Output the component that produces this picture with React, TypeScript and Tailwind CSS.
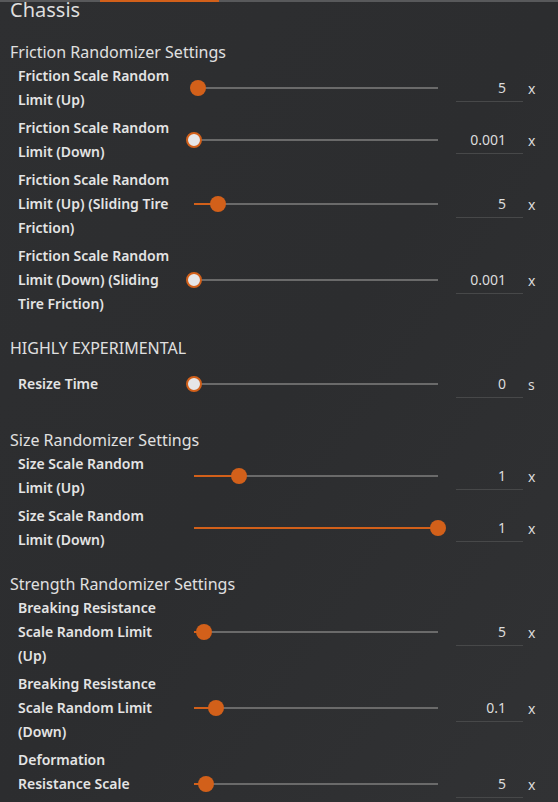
type Row = {
  label: string;
  value: string;
  unit: string;
  pos: number; // 0..1 along the track
};

type Section = {
  title: string;
  rows: Row[];
};

const SECTIONS: Section[] = [
  {
    title: "Friction Randomizer Settings",
    rows: [
      { label: "Friction Scale Random Limit (Up)", value: "5", unit: "x", pos: 0.016 },
      { label: "Friction Scale Random Limit (Down)", value: "0.001", unit: "x", pos: 0 },
      { label: "Friction Scale Random Limit (Up) (Sliding Tire Friction)", value: "5", unit: "x", pos: 0.098 },
      { label: "Friction Scale Random Limit (Down) (Sliding Tire Friction)", value: "0.001", unit: "x", pos: 0 },
    ],
  },
  {
    title: "HIGHLY EXPERIMENTAL",
    rows: [{ label: "Resize Time", value: "0", unit: "s", pos: 0 }],
  },
  {
    title: "Size Randomizer Settings",
    rows: [
      { label: "Size Scale Random Limit (Up)", value: "1", unit: "x", pos: 0.184 },
      { label: "Size Scale Random Limit (Down)", value: "1", unit: "x", pos: 1 },
    ],
  },
  {
    title: "Strength Randomizer Settings",
    rows: [
      { label: "Breaking Resistance Scale Random Limit (Up)", value: "5", unit: "x", pos: 0.041 },
      { label: "Breaking Resistance Scale Random Limit (Down)", value: "0.1", unit: "x", pos: 0.09 },
      { label: "Deformation Resistance Scale Random Limit (Up)", value: "5", unit: "x", pos: 0.049 },
    ],
  },
];

const TRACK = 244;

const Slider = ({ pos }: { pos: number }) => {
  const atMin = pos === 0;
  return (
    <div className="relative ml-[12px] h-[16px] w-[260px] shrink-0">
      {/* track */}
      <div className="absolute left-[8px] right-[8px] top-[7px] h-[2px] bg-[#6a6a6a]" />
      {/* filled part */}
      <div
        className="absolute left-[8px] top-[7px] h-[2px] bg-[#d2601a]"
        style={{ width: pos * TRACK }}
      />
      {/* thumb */}
      <div
        className={
          atMin
            ? "absolute top-0 h-[16px] w-[16px] rounded-full border-2 border-[#d2601a] bg-[#e6e6e8]"
            : "absolute top-0 h-[16px] w-[16px] rounded-full bg-[#d2601a]"
        }
        style={{ left: pos * TRACK }}
      />
    </div>
  );
};

const SettingRow = ({ row }: { row: Row }) => (
  <div className="flex min-h-[48px] items-center pl-[18px]">
    <div className="w-[156px] shrink-0 text-[14px] font-semibold leading-[24px] text-[#e4e4e4]">
      {row.label}
    </div>
    <Slider pos={row.pos} />
    <div className="ml-[10px] flex h-[28px] w-[67px] shrink-0 items-center justify-end border-b border-[#474849] pr-[17px] text-[14px] text-[#dcdcdc]">
      {row.value}
    </div>
    <div className="ml-[5px] text-[14px] text-[#dcdcdc]">{row.unit}</div>
  </div>
);

export default function App() {
  return (
    <div
      className="h-[802px] w-[558px] overflow-hidden bg-gradient-to-br from-[#2e2f31] via-[#2c2d2f] to-[#313234]"
      style={{ fontFamily: '"Noto Sans", "Open Sans", sans-serif' }}
    >
      {/* tab indicator */}
      <div className="flex h-[2px] bg-[#58595b]">
        <div className="ml-[100px] w-[119px] bg-[#d2601a]" />
      </div>

      <h1 className="pl-[10px] text-[20px] leading-[16px] text-[#dedede]">Chassis</h1>

      <div className="mt-[22px] flex flex-col gap-[20px]">
        {SECTIONS.map((s) => (
          <section key={s.title}>
            <h2 className="pl-[10px] text-[16px] leading-[24px] text-[#e0e0e0]">{s.title}</h2>
            <div className="flex flex-col gap-[4px]">
              {s.rows.map((r) => (
                <SettingRow key={r.label} row={r} />
              ))}
            </div>
          </section>
        ))}
      </div>
    </div>
  );
}
